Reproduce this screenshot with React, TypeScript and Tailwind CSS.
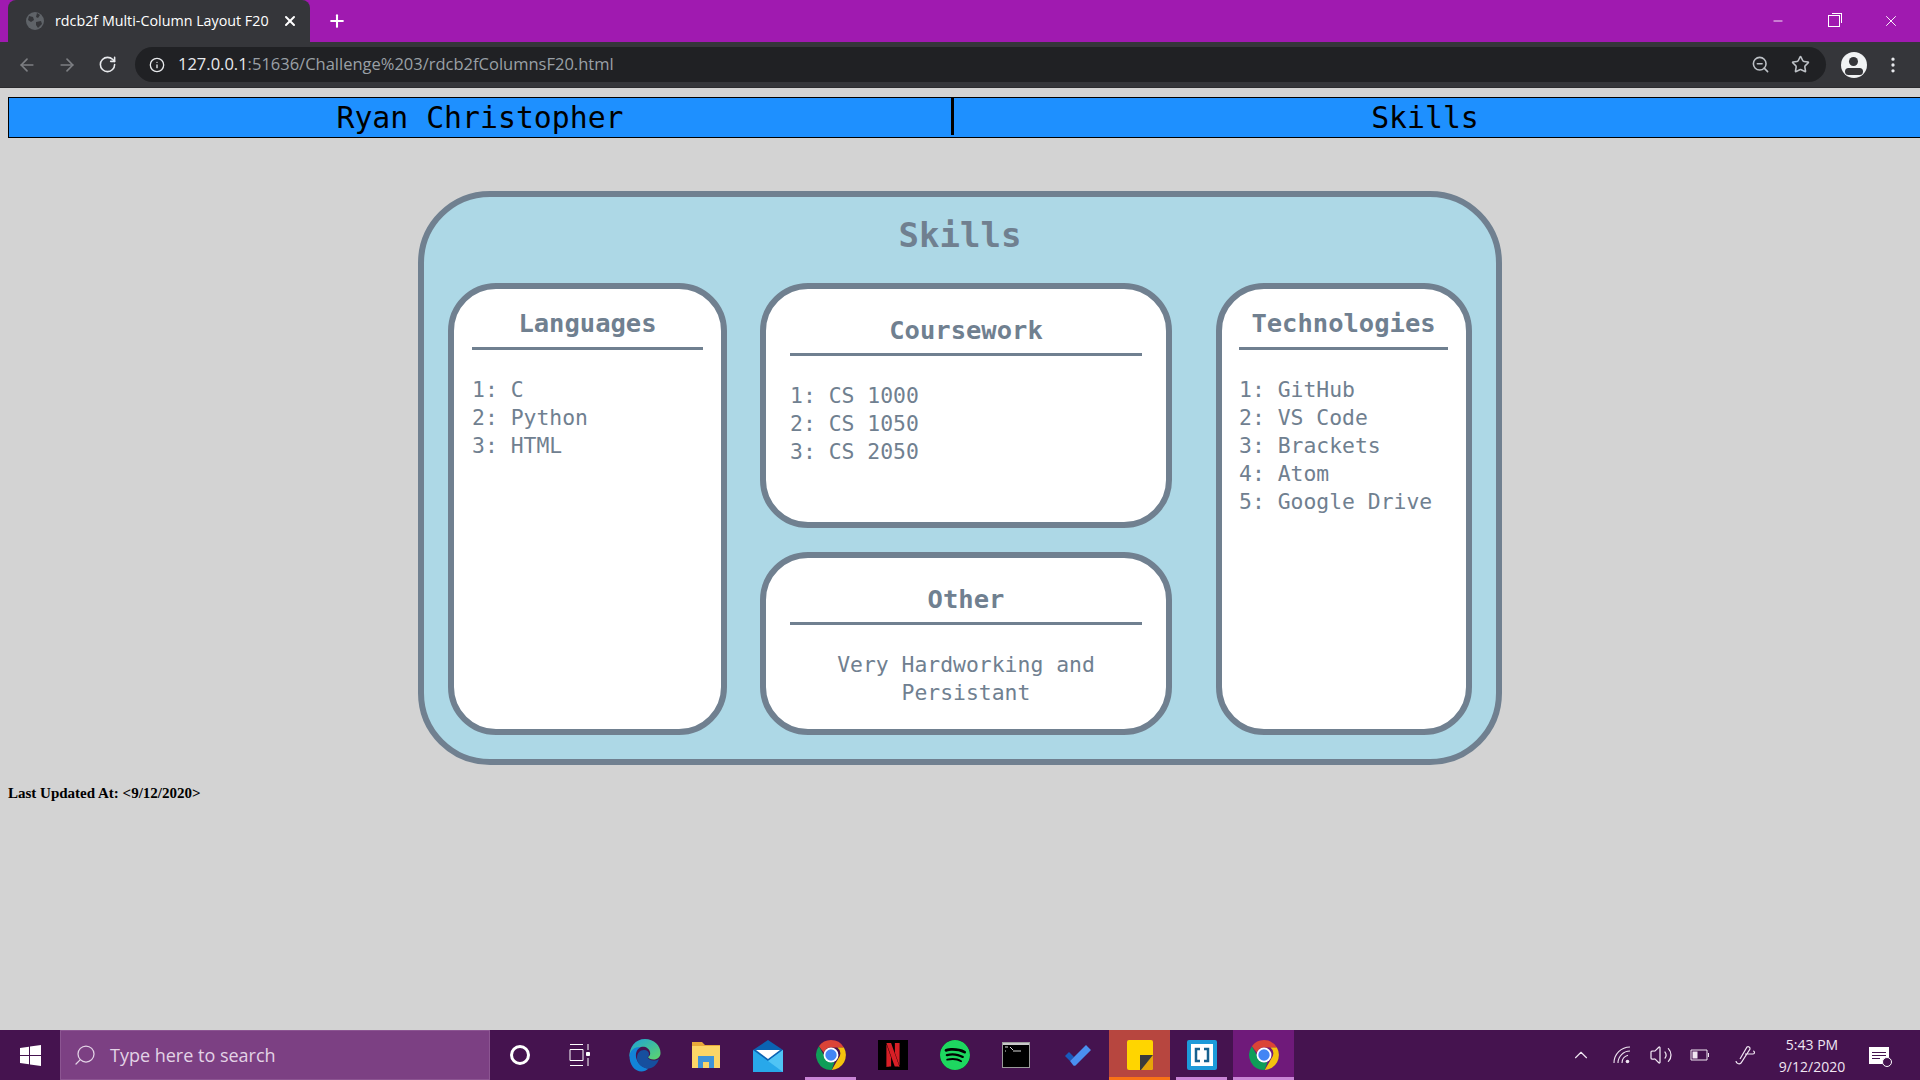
import { ArrowLeft, ArrowRight, RotateCw, Info, ZoomOut, Star, MoreVertical, X, Plus, Minus, Search, ChevronUp, Volume2 } from "lucide-react";
import { SiNetflix, SiSpotify } from "react-icons/si";

const mono = "font-['DejaVu_Sans_Mono','Liberation_Mono',monospace]";

function ChromeLogo({ size = 34 }: { size?: number }) {
  return (
    <svg width={size} height={size} viewBox="0 0 48 48">
      <path d="M24 3a21 21 0 0 1 18.2 10.5H24a10.5 10.5 0 0 0-10 7.3L6.9 11.8A21 21 0 0 1 24 3z" fill="#db4437" />
      <path d="M42.2 13.5A21 21 0 0 1 25 45l9-15.5a10.5 10.5 0 0 0-1-16z" fill="#f4c20d" />
      <path d="M6.9 11.8 16 28a10 10 0 0 0 13 5.5L25 45A21 21 0 0 1 6.9 11.8z" fill="#0f9d58" />
      <circle cx="24" cy="24" r="10.5" fill="#fff" />
      <circle cx="24" cy="24" r="8" fill="#4285f4" />
    </svg>
  );
}

function EdgeLogo() {
  return (
    <svg width="32" height="34" viewBox="0 0 32 34">
      <defs>
        <linearGradient id="edgeTop" x1="0" y1="0" x2="1" y2="1">
          <stop offset="0" stopColor="#1da1d8" />
          <stop offset="1" stopColor="#5fd66a" />
        </linearGradient>
      </defs>
      <path d="M16 1c9 0 15.500 6.500 15.500 14 0 4-3 6.500-7 6.500-3 0-5-1-5.500-2.500 2-1 2.500-3 2-5C20 10 16 8 12 9 6 10.500 2 15 .5 19 0 9 6.500 1 16 1z" fill="url(#edgeTop)" />
      <path d="M.5 17C2 11 7 8.500 11.500 9.500 7.500 11 6 16 7.500 21c1.500 5 6.500 9 12 9.500-2 2-4.500 3-7 3C6 33.500 0 27 .5 17z" fill="#1283d8" />
      <path d="M8 20c0-5 3-8 7-8 3 0 5 2 5 4 0 1.500-.5 2.500-1.500 3 .5 2 3 3.500 6 3.500 2 0 4-.5 5.500-1.500-2 6-7 10-11 9.500C13 30 8 26 8 20z" fill="#164f9e" />
    </svg>
  );
}

function FolderLogo() {
  return (
    <svg width="28" height="28" viewBox="0 0 28 28">
      <path d="M0 1h10l3 3h15v23H0z" fill="#e8a93a" />
      <path d="M0 5h28v22H0z" fill="#fcd667" />
      <path d="M6 27V15h16v12h-5v-6h-6v6z" fill="#3f94d8" />
    </svg>
  );
}

function MailLogo() {
  return (
    <svg width="30" height="33" viewBox="0 0 30 33">
      <path d="M0 11 15 1l15 10v22H0z" fill="#0b63b3" />
      <path d="M3 11h24l-12 9z" fill="#fff" />
      <path d="M0 11l15 11 15-11v22H0z" fill="#28a8ea" />
      <path d="M15 22l15-11v22z" fill="#50c4f5" />
    </svg>
  );
}

function TerminalLogo() {
  return (
    <div className="flex h-[26px] w-[28px] flex-col border border-[#9a9a9a] bg-black">
      <div className="h-[2px] bg-[#c9c9c9]" />
      <svg width="26" height="12" viewBox="0 0 26 12">
        <path d="M2 2h3M2 6h1M7 2l3 3M10 6h8" stroke="#d8d8d8" strokeWidth="1" fill="none" />
      </svg>
    </div>
  );
}

function TodoLogo() {
  return (
    <svg width="26" height="22" viewBox="0 0 26 22">
      <path d="M0 12l4-4 5 5-4 4z" fill="#185abd" />
      <path d="M5 17 21 1l5 5-15 15a2 2 0 0 1-3 0z" fill="#4a90f0" />
    </svg>
  );
}

function StickyLogo() {
  return (
    <svg width="26" height="30" viewBox="0 0 26 30">
      <path d="M2 0h22a2 2 0 0 1 2 2v26a2 2 0 0 1-2 2H2a2 2 0 0 1-2-2V2a2 2 0 0 1 2-2z" fill="#ffd500" />
      <path d="M26 15v13a2 2 0 0 1-2 2H14z" fill="#e5a50a" />
      <path d="M13 15h13L14 30h-1z" fill="#3b3b3b" />
    </svg>
  );
}

function BracketsLogo() {
  return (
    <div className="flex h-[30px] w-[30px] items-center justify-center rounded-[2px] bg-[#1d9ad9]">
      <div className="flex h-[22px] w-[22px] items-center justify-center bg-white">
        <svg width="16" height="16" viewBox="0 0 16 16">
          <path d="M6 2H2v12h4M10 2h4v12h-4" stroke="#17618f" strokeWidth="2.500" fill="none" />
        </svg>
      </div>
    </div>
  );
}

function TaskIcon({ children, className = "w-[51px]", bar = "" }: { children: React.ReactNode; className?: string; bar?: string }) {
  return (
    <div className={`relative flex h-full items-center justify-center ${className}`}>
      {children}
      {bar && <div className={`absolute bottom-0 h-[3px] ${bar}`} />}
    </div>
  );
}

function ListCard({ title, items, className, ruleGap }: { title: string; items: string[]; className: string; ruleGap: string }) {
  return (
    <div className={`rounded-[48px] border-[6px] border-[#708090] bg-white ${className}`}>
      <h2 className={`${ruleGap} border-b-[3px] border-[#708090] text-center text-[25.5px] font-bold leading-[31px] text-[#708090]`}>{title}</h2>
      <ol className="mt-[26px] text-[21.4px] leading-[28px] text-[#708090]">
        {items.map((item, i) => (
          <li key={item} className="whitespace-pre">{`${i + 1}: ${item}`}</li>
        ))}
      </ol>
    </div>
  );
}

export default function App() {
  return (
    <div className="flex h-screen w-full flex-col overflow-hidden bg-[#d3d3d3]">
      {/* browser chrome */}
      <div className="flex h-[42px] items-end bg-[#a01ab0] pl-[8px] text-white">
        <div className="flex h-[42px] w-[302px] items-center rounded-t-[8px] bg-[#35363a] pl-[18px] pr-[12px] font-['Open_Sans',sans-serif] text-[14.3px]">
          <svg width="18" height="18" viewBox="0 0 18 18" className="mr-[11px]">
            <circle cx="9" cy="9" r="9" fill="#5f6368" />
            <path d="M3 4l4 1 1 3-3 2-3-2zM11 1l3 2-2 3-2-1zM10 10l5-1 1 3-4 4-2-3z" fill="#35363a" />
          </svg>
          <span className="flex-1 whitespace-nowrap">rdcb2f Multi-Column Layout F20</span>
          <X size={16} strokeWidth={3} />
        </div>
        <Plus size={20} strokeWidth={2.5} className="mb-[11px] ml-[17px]" />
        <div className="ml-auto flex h-[42px] items-center">
          <div className="flex w-[55px] justify-center"><Minus size={14} strokeWidth={1.5} /></div>
          <div className="flex w-[57px] justify-center">
            <div className="relative h-[12px] w-[12px] border border-white">
              <div className="absolute -right-[3px] -top-[3px] h-[10px] w-[10px] border-r border-t border-white" />
            </div>
          </div>
          <div className="flex w-[58px] justify-center"><X size={18} strokeWidth={1.25} /></div>
        </div>
      </div>
      <div className="flex h-[46px] items-center border-b border-[#2b2b2e] bg-[#35363a] pl-[17px] pr-[17px] text-[#e8eaed]">
        <ArrowLeft size={20} className="text-[#7d7f83]" />
        <ArrowRight size={20} className="ml-[20px] text-[#7d7f83]" />
        <RotateCw size={19} className="ml-[21px]" />
        <div className="ml-[18px] flex h-[35px] flex-1 items-center rounded-full bg-[#202124] pl-[14px] pr-[16px] font-['Open_Sans',sans-serif] text-[16.5px]">
          <Info size={16} className="mr-[13px]" />
          <span className="whitespace-nowrap">127.0.0.1<span className="text-[#9aa0a6]">:51636/Challenge%203/rdcb2fColumnsF20.html</span></span>
          <ZoomOut size={19} className="ml-auto text-[#bdc1c6]" />
          <Star size={19} className="ml-[21px] text-[#bdc1c6]" />
        </div>
        <div className="relative ml-[15px] h-[26px] w-[26px] overflow-hidden rounded-full bg-[#f1f3f4]">
          <div className="absolute left-[8px] top-[5px] h-[9px] w-[9px] rounded-full bg-[#35363a]" />
          <div className="absolute left-[4px] top-[16px] h-[7px] w-[18px] rounded-full bg-[#35363a]" />
        </div>
        <MoreVertical size={20} className="ml-[16px]" />
      </div>

      {/* page */}
      <div className={`min-h-0 flex-1 ${mono}`}>
        <div className="ml-[8px] mt-[9px] flex h-[41px] items-start border border-r-0 border-black bg-[#1e90ff] text-[29.800px] leading-[37px] text-black">
          <div className="h-[37px] w-[945px] border-r-[3px] border-black pt-px text-center">Ryan Christopher</div>
          <div className="flex-1 pr-[24px] pt-px text-center">Skills</div>
        </div>

        <div className="mx-auto mt-[53px] h-[574px] w-[1084px] rounded-[72px] border-[6px] border-[#708090] bg-[#add8e6] px-[24px]">
          <h1 className="pt-[18px] text-center text-[34px] font-bold leading-[40px] text-[#708090]">Skills</h1>
          <div className="mt-[28px] flex h-[452px]">
            <ListCard title="Languages" items={["C", "Python", "HTML"]} className="h-full w-[279px] px-[18px] pt-[19px]" ruleGap="pb-[8px]" />
            <div className="ml-[33px] flex w-[412px] flex-col justify-between">
              <ListCard title="Coursework" items={["CS 1000", "CS 1050", "CS 2050"]} className="h-[245px] px-[24px] pt-[26px]" ruleGap="pb-[7px]" />
              <div className="h-[183px] rounded-[48px] border-[6px] border-[#708090] bg-white px-[24px] pt-[26px]">
                <h2 className="border-b-[3px] border-[#708090] pb-[7px] text-center text-[25.5px] font-bold leading-[31px] text-[#708090]">Other</h2>
                <p className="mt-[26px] text-center text-[21.4px] leading-[28px] text-[#708090]">Very Hardworking and<br />Persistant</p>
              </div>
            </div>
            <ListCard title="Technologies" items={["GitHub", "VS Code", "Brackets", "Atom", "Google Drive"]} className="ml-[44px] h-full w-[256px] pl-[17px] pr-[18px] pt-[19px]" ruleGap="pb-[8px]" />
          </div>
        </div>

        <p className="ml-[8px] mt-[20px] font-['Liberation_Serif',serif] text-[15px] font-bold leading-[17px] text-black">Last Updated At: &lt;9/12/2020&gt;</p>
      </div>

      {/* taskbar */}
      <div className="flex h-[50px] items-center bg-[#45134f] text-white">
        <div className="flex h-full w-[60px] items-center justify-center">
          <svg width="21" height="21" viewBox="0 0 21 21" fill="#fff">
            <path d="M0 3l9-1.300V10H0zM10 1.500 21 0v10H10zM0 11h9v8.300L0 18zM10 11h11v10l-11-1.500z" />
          </svg>
        </div>
        <div className="flex h-full w-[430px] items-center border border-[#8c5592] bg-[#7c4083] pl-[12px] font-['Open_Sans',sans-serif] text-[18px] text-[#e3d3e6]">
          <Search size={24} strokeWidth={1.25} className="-scale-x-100" />
          <span className="ml-[13px]">Type here to search</span>
        </div>
        <TaskIcon className="w-[60px]">
          <div className="h-[20px] w-[20px] rounded-full border-[3px] border-white" />
        </TaskIcon>
        <TaskIcon className="w-[59px]">
          <svg width="22" height="24" viewBox="0 0 22 24" stroke="#fff" fill="none">
            <path d="M1 1.500h13M1 22.500h13M1 6.500h13v11H1zM19 1v6M19 15v8" />
            <path d="M17.500 9.500h3v3h-3z" fill="#fff" />
          </svg>
        </TaskIcon>
        <TaskIcon className="ml-[4px] w-[63px]"><EdgeLogo /></TaskIcon>
        <TaskIcon className="w-[60px]"><FolderLogo /></TaskIcon>
        <TaskIcon className="w-[64px]"><MailLogo /></TaskIcon>
        <TaskIcon className="w-[61px]" bar="w-[51px] bg-[#c985d6]"><ChromeLogo /></TaskIcon>
        <TaskIcon className="w-[63px]">
          <div className="flex h-[30px] w-[30px] items-center justify-center bg-black">
            <SiNetflix size={24} color="#d81f26" />
          </div>
        </TaskIcon>
        <TaskIcon className="w-[61px]">
          <div className="flex h-[30px] w-[30px] items-center justify-center rounded-full bg-black">
            <SiSpotify size={30} color="#1ed760" />
          </div>
        </TaskIcon>
        <TaskIcon className="w-[62px]"><TerminalLogo /></TaskIcon>
        <TaskIcon className="w-[62px]"><TodoLogo /></TaskIcon>
        <TaskIcon className="w-[61px] bg-[#b7463f]" bar="inset-x-0 bg-[#f97316]"><StickyLogo /></TaskIcon>
        <TaskIcon className="w-[63px]" bar="w-[51px] bg-[#c985d6]"><BracketsLogo /></TaskIcon>
        <TaskIcon className="w-[61px] bg-[#6f1a7a]" bar="inset-x-0 bg-[#c985d6]"><ChromeLogo /></TaskIcon>

        <div className="ml-auto flex h-full items-center text-[#f0e6f2]">
          <ChevronUp size={22} strokeWidth={1.25} />
          <svg width="18" height="18" viewBox="0 0 18 18" fill="none" stroke="#f0e6f2" strokeWidth="1.1" className="ml-[21px]">
            <path d="M1 17A16 16 0 0 1 17 1M5 17A12 12 0 0 1 17 5M9 17a8 8 0 0 1 6-7.700" />
            <circle cx="14.500" cy="15.500" r="1.800" fill="#f0e6f2" stroke="none" />
          </svg>
          <Volume2 size={24} strokeWidth={1.25} className="ml-[18px]" />
          <svg width="20" height="12" viewBox="0 0 20 12" fill="none" stroke="#f0e6f2" className="ml-[17px]">
            <path d="M1 1h16v10H1zM18.500 4v4" />
            <path d="M2.500 2.500h5v7h-5z" fill="#f0e6f2" stroke="none" />
          </svg>
          <svg width="22" height="22" viewBox="0 0 22 22" fill="none" stroke="#f0e6f2" strokeWidth="1.2" className="ml-[24px]">
            <path d="M2 17a3 3 0 0 0 5 2L16 5a2 2 0 0 0-3-2L6 15M11 10h8c2 0 2-3 0-3" />
          </svg>
          <div className="ml-[18px] w-[76px] pt-px text-center font-['Open_Sans',sans-serif] text-[14px] leading-[22px]">
            <div>5:43 PM</div>
            <div>9/12/2020</div>
          </div>
          <div className="relative ml-[19px] mr-[31px] flex h-[17px] w-[20px] flex-col justify-center gap-[2px] bg-white px-[3px]">
            <div className="h-px bg-[#45134f]" />
            <div className="h-px bg-[#45134f]" />
            <div className="h-px w-[8px] bg-[#45134f]" />
            <div className="absolute -bottom-[3px] -right-[3px] h-[10px] w-[10px] rounded-full border border-white bg-[#45134f]" />
          </div>
        </div>
      </div>
    </div>
  );
}
